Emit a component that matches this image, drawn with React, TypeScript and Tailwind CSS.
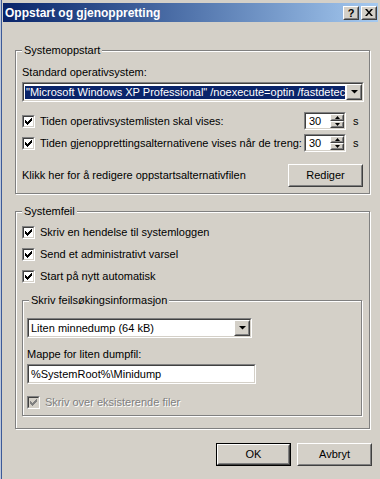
import React from "react";

const font = "font-['Liberation_Sans',Arial,sans-serif]";

function Check({ disabled }: { disabled?: boolean }) {
  const cols = [2, 3, 4, 3, 2, 1, 0];
  return (
    <div className="h-[13px] w-[13px] shrink-0 border border-t-[#808080] border-l-[#808080] border-b-white border-r-white">
      <div
        className={
          "flex h-full w-full items-center justify-center border border-t-[#404040] border-l-[#404040] border-b-[#d4d0c8] border-r-[#d4d0c8] " +
          (disabled ? "bg-[#d4d0c8]" : "bg-white")
        }
      >
        <svg width="7" height="7" viewBox="0 0 7 7">
          {cols.map((y, x) => (
            <rect key={x} x={x} y={y} width="1" height="3" fill={disabled ? "#808080" : "#000"} />
          ))}
        </svg>
      </div>
    </div>
  );
}

function Raised({ className, children }: { className?: string; children?: React.ReactNode }) {
  return (
    <div className={"border border-t-white border-l-white border-b-[#404040] border-r-[#404040] bg-[#d4d0c8] " + (className ?? "")}>
      <div className="flex h-full w-full items-center justify-center border border-t-[#d4d0c8] border-l-[#d4d0c8] border-b-[#808080] border-r-[#808080]">
        {children}
      </div>
    </div>
  );
}

function Sunken({ className, children }: { className?: string; children?: React.ReactNode }) {
  return (
    <div className={"border border-t-[#808080] border-l-[#808080] border-b-white border-r-white " + (className ?? "")}>
      <div className="flex h-full w-full items-center border border-t-[#404040] border-l-[#404040] border-b-[#d4d0c8] border-r-[#d4d0c8] bg-white">
        {children}
      </div>
    </div>
  );
}

function DownArrow() {
  return (
    <svg width="7" height="4" viewBox="0 0 7 4">
      <path d="M0 0h7L3.5 3.5z" fill="#000" />
    </svg>
  );
}

function Combo({ text, selected, className }: { text: string; selected?: boolean; className?: string }) {
  return (
    <Sunken className={"h-[20px] " + (className ?? "")}>
      <div className="flex min-w-0 flex-1 items-center overflow-hidden pl-[1px] pr-[1px]">
        <span
          className={
            "block w-full overflow-hidden whitespace-nowrap px-[1px] leading-[13px] " +
            (selected ? "bg-[#0a246a] text-white" : "text-black")
          }
        >
          {text}
        </span>
      </div>
      <Raised className="h-[16px] w-[16px] shrink-0">
        <DownArrow />
      </Raised>
    </Sunken>
  );
}

function Spin() {
  return (
    <Sunken className="h-[18px] w-[42px]">
      <span className="flex-1 pl-[3px] leading-[13px]">30</span>
      <div className="flex h-full w-[14px] flex-col">
        <Raised className="h-[7px] w-full">
          <svg width="5" height="3" viewBox="0 0 5 3">
            <path d="M2.5 0L5 3H0z" fill="#000" />
          </svg>
        </Raised>
        <Raised className="h-[7px] w-full">
          <svg width="5" height="3" viewBox="0 0 5 3">
            <path d="M0 0h5L2.5 3z" fill="#000" />
          </svg>
        </Raised>
      </div>
    </Sunken>
  );
}

function Group({ label, className, children }: { label: string; className?: string; children?: React.ReactNode }) {
  return (
    <div className={"border border-[#808080] shadow-[1px_1px_0_#fff,inset_1px_1px_0_#fff] " + (className ?? "")}>
      <div className="-mt-[7px] ml-[6px] w-fit bg-[#d4d0c8] px-[2px] leading-[13px]">{label}</div>
      {children}
    </div>
  );
}

function Button({ label, isDefault }: { label: string; isDefault?: boolean }) {
  const btn = (
    <Raised className="h-full w-full">
      <span className="leading-[13px]">{label}</span>
    </Raised>
  );
  return isDefault ? (
    <div className="h-[23px] w-[75px] border border-black">{btn}</div>
  ) : (
    <div className="h-[23px] w-[75px]">{btn}</div>
  );
}

export default function App() {
  return (
    <div className={"h-[479px] w-[380px] overflow-hidden border-l border-l-[#bcc6da] bg-[#d4d0c8] text-[11px] text-black " + font}>
      <div className="h-full border-l border-l-[#3c5a98] pl-[1px] pr-[2px] pt-[3px]">
        {/* title bar */}
        <div className="flex h-[19px] items-center bg-gradient-to-r from-[#0a246a] to-[#a6caf0] pl-[2px] pr-[1px]">
          <span className="flex-1 text-[12px] font-bold leading-[14px] text-white">Oppstart og gjenoppretting</span>
          <div className="flex gap-[2px]">
            <Raised className="h-[14px] w-[16px]">
              <span className="text-[11px] font-bold leading-[10px]">?</span>
            </Raised>
            <Raised className="h-[14px] w-[16px]">
              <svg width="8" height="7" viewBox="0 0 8 7">
                <path d="M0 0h2l2 2.5L6 0h2L5 3.5 8 7H6L4 4.5 2 7H0l3-3.5z" fill="#000" />
              </svg>
            </Raised>
          </div>
        </div>

        {/* Systemoppstart */}
        <Group label="Systemoppstart" className="ml-[12px] mt-[28px] w-[355px]">
          <div className="pb-[6px] pl-[6px] pr-[5px]">
            <div className="mt-[9px] leading-[13px]">Standard operativsystem:</div>
            <Combo
              selected
              className="mt-[3px] w-[342px]"
              text={'"Microsoft Windows XP Professional" /noexecute=optin /fastdetect'}
            />
            <div className="mt-[10px] flex h-[18px] items-center">
              <Check />
              <span className="ml-[5px] flex-1 leading-[13px]">Tiden operativsystemlisten skal vises:</span>
              <Spin />
              <span className="ml-[7px] w-[11px] leading-[13px]">s</span>
            </div>
            <div className="mt-[4px] flex h-[18px] items-center">
              <Check />
              <span className="ml-[5px] flex-1 whitespace-nowrap leading-[13px]">
                Tiden gjenopprettingsalternativene vises når de treng:
              </span>
              <Spin />
              <span className="ml-[7px] w-[11px] leading-[13px]">s</span>
            </div>
            <div className="mt-[12px] flex h-[23px] items-center">
              <span className="flex-1 leading-[13px]">Klikk her for å redigere oppstartsalternativfilen</span>
              <div className="mr-[1px]">
                <Button label="Rediger" />
              </div>
            </div>
          </div>
        </Group>

        {/* Systemfeil */}
        <Group label="Systemfeil" className="ml-[12px] mt-[17px] w-[355px]">
          <div className="pb-[12px] pl-[6px]">
            <div className="mt-[8px] flex flex-col gap-[9px]">
              <div className="flex h-[13px] items-center">
                <Check />
                <span className="ml-[5px] leading-[13px]">Skriv en hendelse til systemloggen</span>
              </div>
              <div className="flex h-[13px] items-center">
                <Check />
                <span className="ml-[5px] leading-[13px]">Send et administrativt varsel</span>
              </div>
              <div className="flex h-[13px] items-center">
                <Check />
                <span className="ml-[5px] leading-[13px]">Start på nytt automatisk</span>
              </div>
            </div>

            <Group label="Skriv feilsøkingsinformasjon" className="mt-[17px] w-[340px]">
              <div className="pb-[6px] pl-[4px]">
                <Combo className="mt-[11px] w-[225px]" text="Liten minnedump (64 kB)" />
                <div className="mt-[10px] leading-[13px]">Mappe for liten dumpfil:</div>
                <Sunken className="mt-[3px] h-[20px] w-[229px]">
                  <span className="pl-[2px] leading-[13px]">%SystemRoot%\Minidump</span>
                </Sunken>
                <div className="mt-[12px] flex h-[13px] items-center">
                  <Check disabled />
                  <span className="ml-[5px] leading-[13px] text-[#808080] [text-shadow:1px_1px_0_#fff]">
                    Skriv over eksisterende filer
                  </span>
                </div>
              </div>
            </Group>
          </div>
        </Group>

        {/* buttons */}
        <div className="mt-[14px] flex gap-[6px] pl-[213px]">
          <Button label="OK" isDefault />
          <Button label="Avbryt" />
        </div>
      </div>
    </div>
  );
}
